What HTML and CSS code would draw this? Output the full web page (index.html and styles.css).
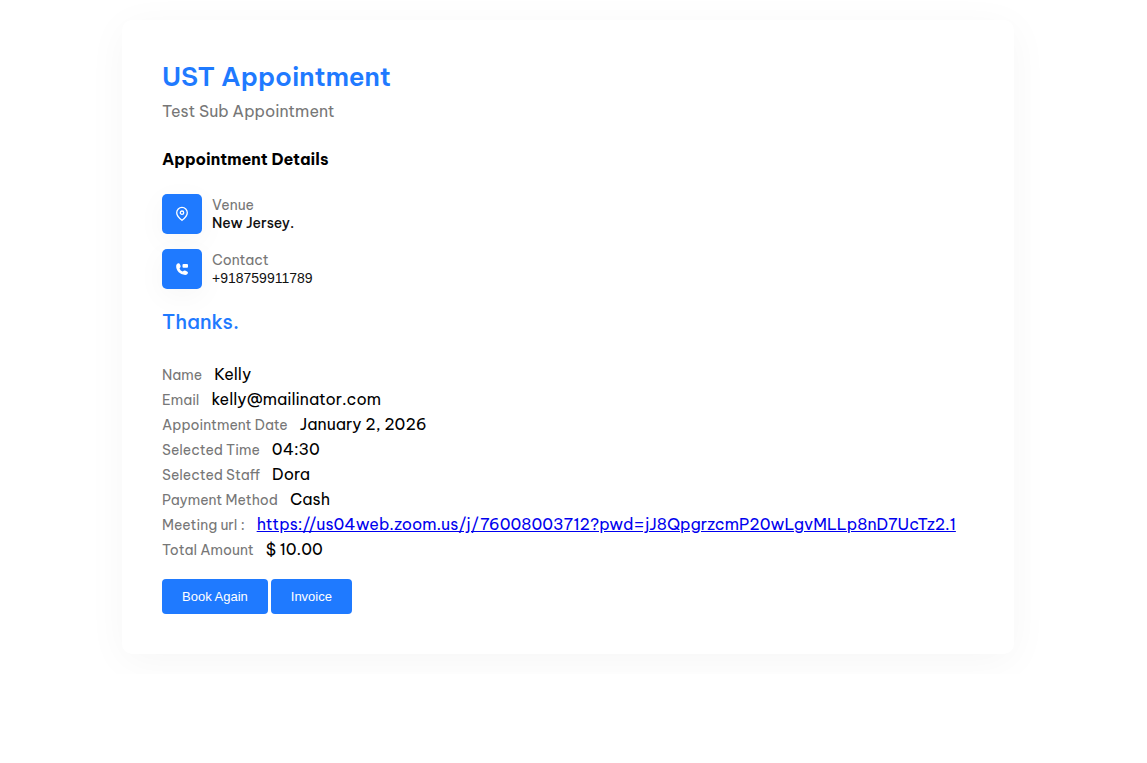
FILE: index.html
```
<!DOCTYPE html>
<html lang="en">
<head>
<meta charset="utf-8">
<meta name="viewport" content="width=device-width, initial-scale=1">
<title>UST Appointment</title>
<link rel="stylesheet" href="styles.css">
</head>
<body>
<main class="card">
  <header class="card-header">
    <h1 class="title">UST Appointment</h1>
    <p class="subtitle">Test Sub Appointment</p>
  </header>
  <h2 class="section-title">Appointment Details</h2>
  <ul class="info-list">
    <li class="info">
      <span class="info-icon">
        <svg width="16" height="16" viewBox="0 0 16 16" fill="none" stroke="#fff" stroke-width="1.3" aria-hidden="true"><path d="M8 14.300C5.600 12.400 2.700 9.900 2.700 6.700a5.300 5.300 0 0 1 10.600 0c0 3.200-2.900 5.700-5.300 7.600z"/><circle cx="8" cy="6.700" r="1.700"/></svg>
      </span>
      <div><p class="info-label">Venue</p><p class="info-value info-value-strong">New Jersey.</p></div>
    </li>
    <li class="info">
      <span class="info-icon">
        <svg width="16" height="16" viewBox="0 0 16 16" fill="#fff" aria-hidden="true"><path d="M2.300 4Q3.100 2 4.600 2.200q.9.100 1.400 1.300l.6 1.500q.4 1-1.100 2.400Q6.400 9.600 8.700 10.600q1.400-1.500 2.400-1.100l2 .9q1.200.6.800 1.900-.5 1.700-2.700 1.700Q7.500 13.900 4.700 11.200 1.600 8 2.300 4z"/><rect x="8.500" y="3" width="5.500" height="3.800" rx="1"/></svg>
      </span>
      <div><p class="info-label">Contact</p><p class="info-value info-value-phone">+918759911789</p></div>
    </li>
  </ul>
  <h2 class="thanks">Thanks.</h2>
  <dl class="details">
    <div class="row"><dt>Name</dt><dd>Kelly</dd></div>
    <div class="row"><dt>Email</dt><dd>kelly@mailinator.com</dd></div>
    <div class="row"><dt>Appointment Date</dt><dd>January 2, 2026</dd></div>
    <div class="row"><dt>Selected Time</dt><dd>04:30</dd></div>
    <div class="row"><dt>Selected Staff</dt><dd>Dora</dd></div>
    <div class="row"><dt>Payment Method</dt><dd>Cash</dd></div>
    <div class="row"><dt>Meeting url :</dt><dd><a href="https://us04web.zoom.us/j/76008003712?pwd=jJ8QpgrzcmP20wLgvMLLp8nD7UcTz2.1">https://us04web.zoom.us/j/76008003712?pwd=jJ8QpgrzcmP20wLgvMLLp8nD7UcTz2.1</a></dd></div>
    <div class="row"><dt>Total Amount</dt><dd>$ 10.00</dd></div>
  </dl>
  <div class="actions">
    <button type="button" class="button">Book Again</button>
    <button type="button" class="button">Invoice</button>
  </div>
</main>
</body>
</html>
```
FILE: styles.css
```
* { box-sizing: border-box; }
body {
  margin: 0;
  padding: 20px 133px 20px 122px;
  background: #fff;
  color: #000;
  font-family: "Be Vietnam Pro", Lato, "Liberation Sans", sans-serif;
  font-size: 16px;
  line-height: 25px;
}
h1, h2, p, ul, dl, dd { margin: 0; padding: 0; }
ul { list-style: none; }
.card {
  padding: 40px;
  background: #fff;
  border-radius: 10px;
  box-shadow: 0 7px 40px rgba(0, 0, 0, 0.04);
}
.title { color: #1f7aff; font-size: 26px; line-height: 34px; font-weight: 600; }
.subtitle { margin-top: 5px; color: #777; }
.section-title { margin-top: 23px; font-size: 16px; line-height: 25px; font-weight: 700; }
.info-list { display: flex; flex-direction: column; gap: 15px; margin-top: 22px; }
.info { display: flex; align-items: center; gap: 10px; }
.info-icon {
  display: flex;
  align-items: center;
  justify-content: center;
  width: 40px;
  height: 40px;
  border-radius: 5px;
  background: #1f7aff;
  box-shadow: 0 7px 30px rgba(0, 0, 0, 0.04);
}
.info-label { color: #777; font-size: 14px; line-height: 18px; }
.info-value { font-size: 14px; line-height: 18px; color: #111; }
.info-value-strong { font-weight: 500; }
.info-value-phone { font-family: "Liberation Sans", sans-serif; }
.thanks { margin-top: 20px; color: #1f7aff; font-size: 20px; line-height: 25px; font-weight: 500; }
.details { margin-top: 28px; }
.row { display: flex; align-items: baseline; gap: 12px; }
.row dt { color: #777; font-size: 14px; line-height: 20px; white-space: nowrap; }
.row dd { overflow-wrap: anywhere; min-width: 0; }
.row a { color: #00e; }
.actions { display: flex; gap: 3px; margin-top: 17px; }
.button {
  height: 35px;
  padding: 0 20px;
  border: 0;
  border-radius: 4px;
  background: #1f7aff;
  color: #fff;
  font: 500 13px/18px "Liberation Sans", sans-serif;
}
```
